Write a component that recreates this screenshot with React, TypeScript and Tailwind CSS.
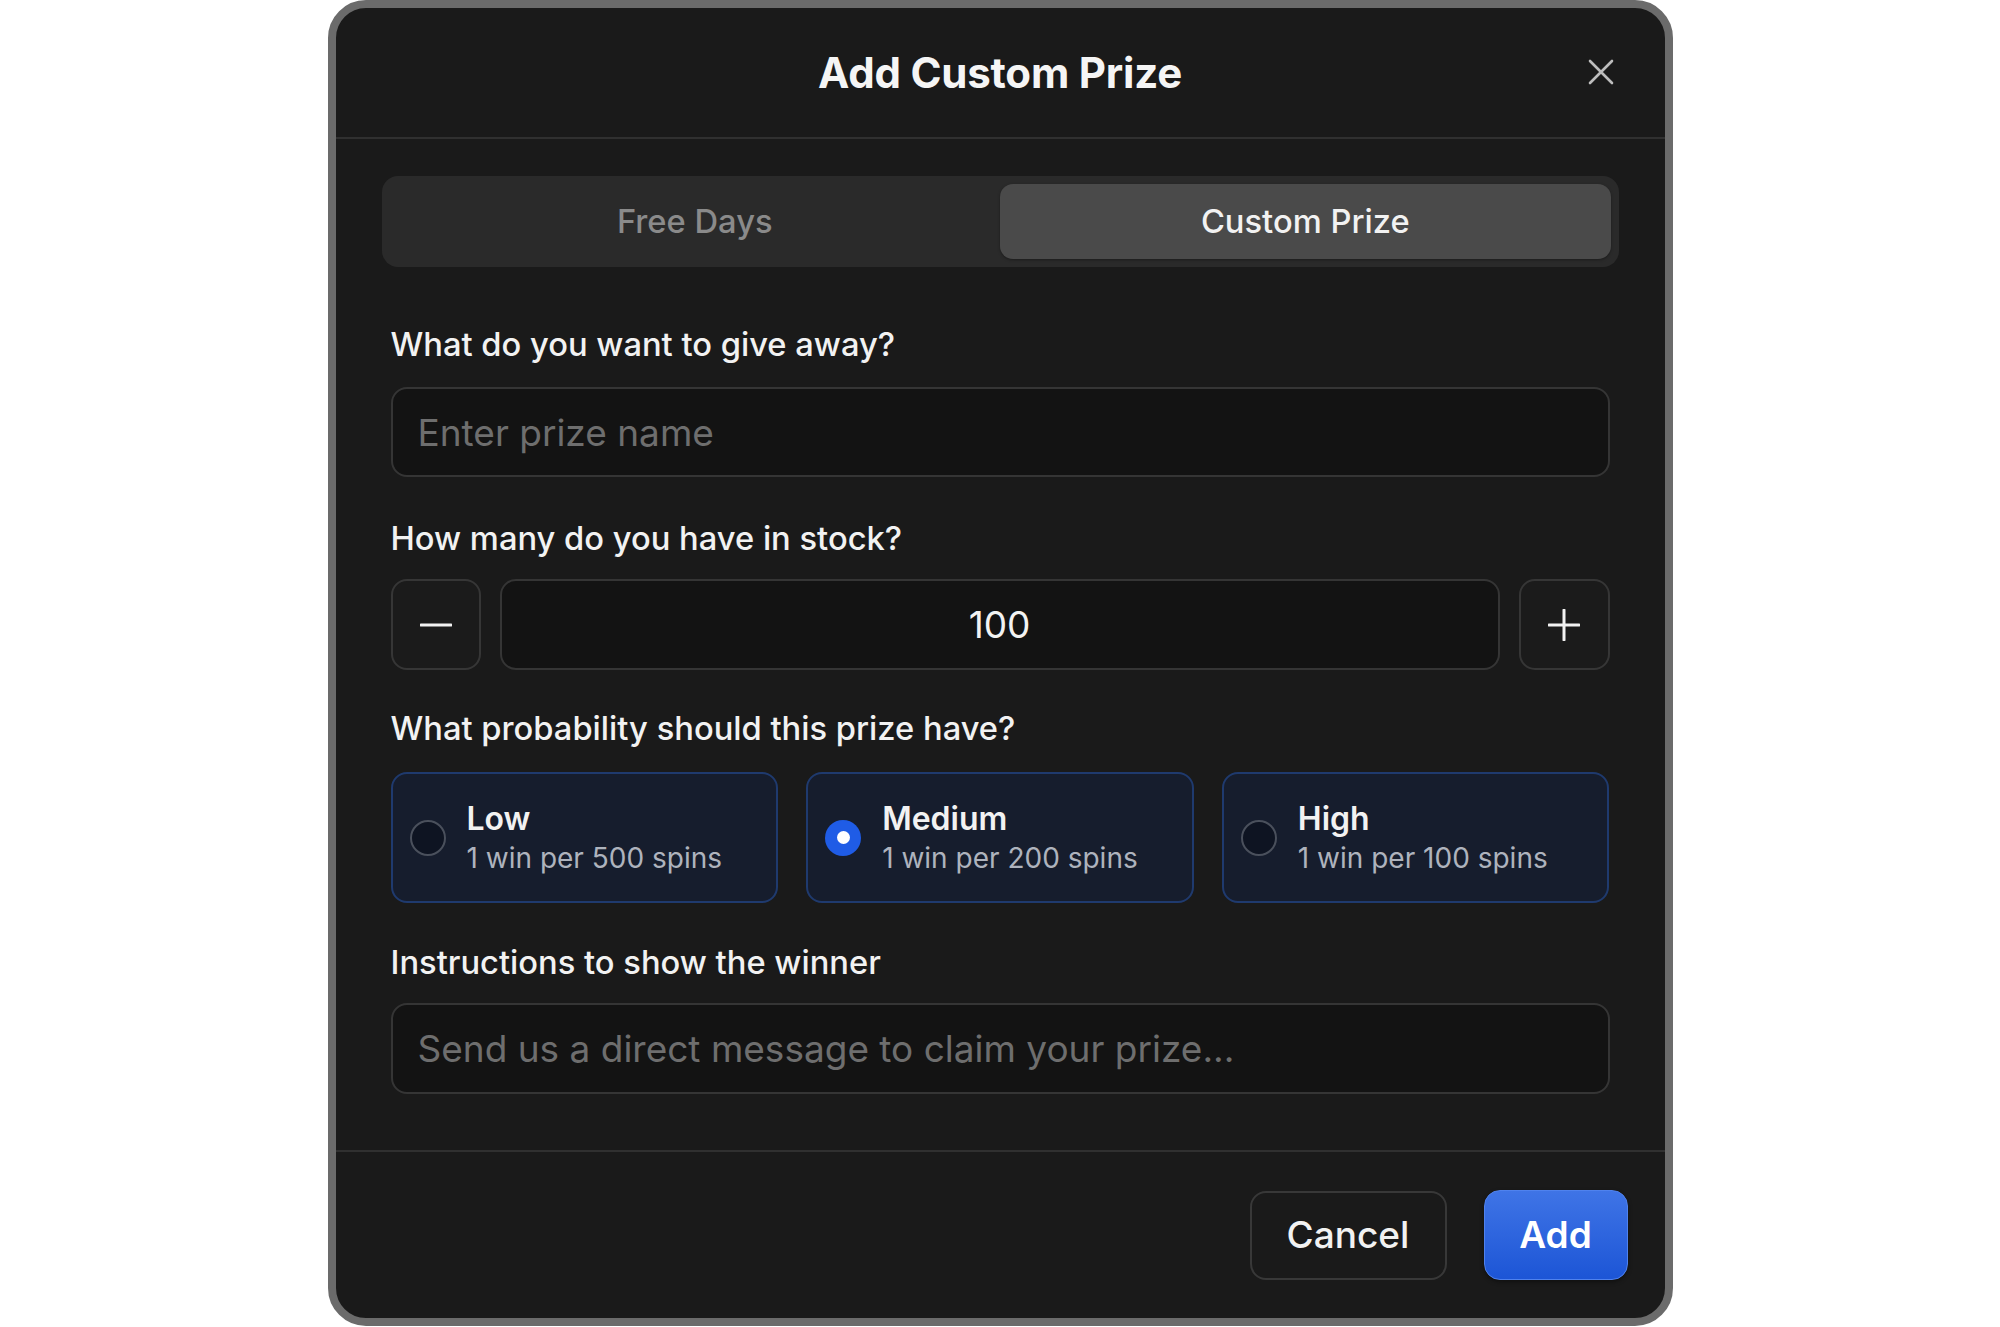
import React from "react";

const font = { fontFamily: "Inter, 'Noto Sans', sans-serif" };

function Label({ children, className = "" }: { children: React.ReactNode; className?: string }) {
  return (
    <div className={`text-[32.7px] leading-[36px] font-medium text-[#f2f2f2] ${className}`}>{children}</div>
  );
}

function Radio({ checked }: { checked?: boolean }) {
  if (checked) {
    return (
      <div className="w-[36px] h-[36px] rounded-full bg-[#1f5ce6] flex items-center justify-center shrink-0">
        <div className="w-[13px] h-[13px] rounded-full bg-white" />
      </div>
    );
  }
  return <div className="w-[36px] h-[36px] rounded-full border-2 border-[#4a505c] bg-[#0e1422] shrink-0" />;
}

function Card({ title, sub, checked }: { title: string; sub: string; checked?: boolean }) {
  return (
    <div className="h-[131px] rounded-[16px] border-2 border-[#1f3a6e] bg-[#161d2d] flex items-center pl-[17px]">
      <Radio checked={checked} />
      <div className="ml-[21px] flex flex-col">
        <div className="text-[32px] leading-[38px] font-semibold text-[#f2f2f2]">{title}</div>
        <div className="mt-[3px] text-[28px] leading-[34px] text-[#aeb3bd]">{sub}</div>
      </div>
    </div>
  );
}

export default function App() {
  return (
    <div className="w-full h-[1327px] bg-white flex justify-center" style={font}>
      <div className="w-[1345px] h-[1326px] border-[8px] border-[#6b6b6b] rounded-[38px] bg-[#1a1a1a] flex flex-col overflow-hidden">
        {/* Header */}
        <div className="h-[131px] shrink-0 border-b-2 border-[#303030] relative flex items-center justify-center">
          <div className="text-[42px] font-bold text-[#f5f5f5] tracking-[-0.2px]">Add Custom Prize</div>
          <button className="absolute right-[51px] top-[51px] w-[26px] h-[26px] flex items-center justify-center">
            <svg width="26" height="26" viewBox="0 0 26 26" fill="none">
              <path d="M2 2 L24 24 M24 2 L2 24" stroke="#bdbdbd" strokeWidth="2.6" strokeLinecap="round" />
            </svg>
          </button>
        </div>

        {/* Body */}
        <div className="flex-1 px-[46px] flex flex-col">
          <div className="mt-[37px] h-[91px] rounded-[16px] bg-[#2a2a2a] p-[8px] grid grid-cols-2">
            <div className="flex items-center justify-center text-[32.7px] font-medium text-[#8a8a8a]">Free Days</div>
            <div className="flex items-center justify-center rounded-[13px] bg-[#4a4a4a] shadow-[0_1px_3px_rgba(0,0,0,0.35)] text-[32.7px] font-medium text-[#f2f2f2]">
              Custom Prize
            </div>
          </div>

          <div className="px-[9px] flex flex-col">
            <Label className="mt-[59px]">What do you want to give away?</Label>
            <input
              className="mt-[25px] h-[90px] rounded-[16px] border-2 border-[#353535] bg-[#131313] px-[25px] text-[37px] text-[#f2f2f2] placeholder:text-[#6e6e6e] outline-none"
              placeholder="Enter prize name"
              style={font}
            />

            <Label className="mt-[43px]">How many do you have in stock?</Label>
            <div className="mt-[23px] h-[91px] flex gap-[19px]">
              <button className="w-[90px] h-[91px] rounded-[16px] border-2 border-[#363636] bg-[#1b1b1b] flex items-center justify-center shrink-0">
                <svg width="32" height="32" viewBox="0 0 32 32" fill="none">
                  <path d="M1 16 H31" stroke="#f2f2f2" strokeWidth="3" strokeLinecap="round" />
                </svg>
              </button>
              <div className="flex-1 rounded-[16px] border-2 border-[#353535] bg-[#131313] flex items-center justify-center text-[37px] text-[#f2f2f2]">
                100
              </div>
              <button className="w-[91px] h-[91px] rounded-[16px] border-2 border-[#363636] bg-[#1b1b1b] flex items-center justify-center shrink-0">
                <svg width="32" height="32" viewBox="0 0 32 32" fill="none">
                  <path d="M1 16 H31 M16 1 V31" stroke="#f2f2f2" strokeWidth="3" strokeLinecap="round" />
                </svg>
              </button>
            </div>

            <Label className="mt-[40px]">What probability should this prize have?</Label>
            <div className="mt-[26px] grid grid-cols-3 gap-[28px]">
              <Card title="Low" sub="1 win per 500 spins" />
              <Card title="Medium" sub="1 win per 200 spins" checked />
              <Card title="High" sub="1 win per 100 spins" />
            </div>

            <Label className="mt-[41px]">Instructions to show the winner</Label>
            <input
              className="mt-[23px] h-[91px] rounded-[16px] border-2 border-[#353535] bg-[#131313] px-[25px] text-[37px] text-[#f2f2f2] placeholder:text-[#6e6e6e] outline-none"
              placeholder="Send us a direct message to claim your prize..."
              style={font}
            />
          </div>
        </div>

        {/* Footer */}
        <div className="h-[168px] shrink-0 border-t-2 border-[#303030] flex items-center justify-end pr-[37px] gap-[37px]">
          <button className="h-[89px] w-[197px] rounded-[16px] border-2 border-[#383838] bg-transparent text-[37px] font-medium text-[#f2f2f2]">
            Cancel
          </button>
          <button className="h-[90px] w-[144px] rounded-[16px] border border-[#4f82ee] bg-gradient-to-b from-[#3f74e6] to-[#1c55d6] shadow-[0_2px_4px_rgba(0,0,0,0.4)] text-[37px] font-semibold text-white">
            Add
          </button>
        </div>
      </div>
    </div>
  );
}
